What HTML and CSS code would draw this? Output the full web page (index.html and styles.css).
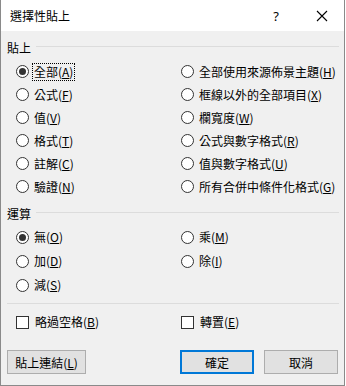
FILE: index.html
```html
<!DOCTYPE html>
<html>
  <head>
    <title>選擇性貼上</title>
    <link rel="stylesheet" href="styles.css">
  </head>
  <body>
    <div class="dialog">
      <div class="titlebar">
        <span class="title">選擇性貼上</span>
        <span class="help">?</span>
        <span class="close">
          <svg width="12" height="12" viewBox="0 0 12 12">
            <path d="M1 1 L11 11 M11 1 L1 11" stroke="#000" stroke-width="1.1" fill="none" />
          </svg>
        </span>
      </div>

      <div class="group-header">
        <span>貼上</span>
        <div class="rule"></div>
      </div>
      <div class="options paste">
        <div class="option"><span class="radio checked"></span><span class="label focus">全部(<u>A</u>)</span></div>
        <div class="option"><span class="radio"></span><span class="label">全部使用來源佈景主題(<u>H</u>)</span></div>
        <div class="option"><span class="radio"></span><span class="label">公式(<u>F</u>)</span></div>
        <div class="option"><span class="radio"></span><span class="label">框線以外的全部項目(<u>X</u>)</span></div>
        <div class="option"><span class="radio"></span><span class="label">值(<u>V</u>)</span></div>
        <div class="option"><span class="radio"></span><span class="label">欄寬度(<u>W</u>)</span></div>
        <div class="option"><span class="radio"></span><span class="label">格式(<u>T</u>)</span></div>
        <div class="option"><span class="radio"></span><span class="label">公式與數字格式(<u>R</u>)</span></div>
        <div class="option"><span class="radio"></span><span class="label">註解(<u>C</u>)</span></div>
        <div class="option"><span class="radio"></span><span class="label">值與數字格式(<u>U</u>)</span></div>
        <div class="option"><span class="radio"></span><span class="label">驗證(<u>N</u>)</span></div>
        <div class="option"><span class="radio"></span><span class="label">所有合併中條件化格式(<u>G</u>)</span></div>
      </div>

      <div class="group-header ops-header">
        <span>運算</span>
        <div class="rule"></div>
      </div>
      <div class="options ops">
        <div class="option"><span class="radio checked"></span><span class="label">無(<u>O</u>)</span></div>
        <div class="option"><span class="radio"></span><span class="label">乘(<u>M</u>)</span></div>
        <div class="option"><span class="radio"></span><span class="label">加(<u>D</u>)</span></div>
        <div class="option"><span class="radio"></span><span class="label">除(<u>I</u>)</span></div>
        <div class="option"><span class="radio"></span><span class="label">減(<u>S</u>)</span></div>
      </div>

      <div class="separator"></div>

      <div class="options checks">
        <div class="option"><span class="checkbox"></span><span class="label">略過空格(<u>B</u>)</span></div>
        <div class="option"><span class="checkbox"></span><span class="label">轉置(<u>E</u>)</span></div>
      </div>

      <div class="footer">
        <button class="btn link">貼上連結(<u>L</u>)</button>
        <div class="spacer"></div>
        <button class="btn default">確定</button>
        <button class="btn">取消</button>
      </div>
    </div>
  </body>
</html>
```

FILE: styles.css
```css
body {
  margin: 0;
  background: #ffffff;
  font-family: "Noto Sans CJK TC", "Noto Sans", sans-serif;
  font-size: 12px;
  color: #000000;
}

.dialog {
  width: 345px;
  height: 386px;
  box-sizing: border-box;
  border: 1px solid #8a8a8a;
  border-top: none;
  background: #f0f0f0;
  display: flex;
  flex-direction: column;
}

.titlebar {
  height: 31px;
  background: #ffffff;
  display: flex;
  align-items: center;
  padding-left: 9px;
}

.titlebar .title {
  flex: 1;
  font-size: 12px;
}

.titlebar .help {
  width: 10px;
  text-align: center;
  margin-right: 35px;
  font-family: "Noto Sans", sans-serif;
  font-size: 13px;
}

.titlebar .close {
  width: 12px;
  height: 12px;
  margin-right: 16px;
  display: flex;
}

.group-header {
  display: flex;
  align-items: center;
  height: 16px;
  margin-top: 8px;
  padding: 0 5px 0 6px;
}

.group-header .rule {
  flex: 1;
  height: 1px;
  background: #dcdcdc;
  margin-left: 5px;
  margin-top: -2px;
}

.options {
  display: grid;
  grid-template-columns: 165px 1fr;
  padding-left: 15px;
}

.paste {
  margin-top: 5px;
  grid-auto-rows: 23px;
}

.ops-header {
  margin-top: 7px;
}

.ops {
  margin-top: 4px;
  grid-auto-rows: 24px;
}

.option {
  display: flex;
  align-items: center;
}

.radio {
  width: 11px;
  height: 11px;
  border: 1px solid #333333;
  border-radius: 50%;
  background: #ffffff;
  margin-right: 5px;
  position: relative;
  flex: none;
}

.radio.checked::after {
  content: "";
  position: absolute;
  left: 2px;
  top: 2px;
  width: 7px;
  height: 7px;
  border-radius: 50%;
  background: #333333;
}

.checkbox {
  width: 11px;
  height: 11px;
  border: 1px solid #333333;
  background: #ffffff;
  margin-right: 6px;
  flex: none;
}

.label {
  line-height: 16px;
  white-space: nowrap;
}

.label.focus {
  outline: 1px dotted #000000;
  outline-offset: 0;
  padding: 0 1px;
  margin-left: -1px;
}

.separator {
  height: 1px;
  background: #dcdcdc;
  margin: 6px 5px 0 6px;
}

.checks {
  margin-top: 6px;
  grid-auto-rows: 24px;
}

.footer {
  display: flex;
  margin-top: 16px;
  padding: 0 6px 0 6px;
  gap: 10px;
}

.footer .spacer {
  flex: 1;
}

.btn {
  width: 74px;
  height: 24px;
  box-sizing: border-box;
  border: 1px solid #adadad;
  background: #e1e1e1;
  font-family: "Noto Sans CJK TC", "Noto Sans", sans-serif;
  font-size: 12px;
  color: #000000;
  padding: 0;
}

.btn.link {
  width: 79px;
}

.btn.default {
  border: 2px solid #0078d7;
}
```
